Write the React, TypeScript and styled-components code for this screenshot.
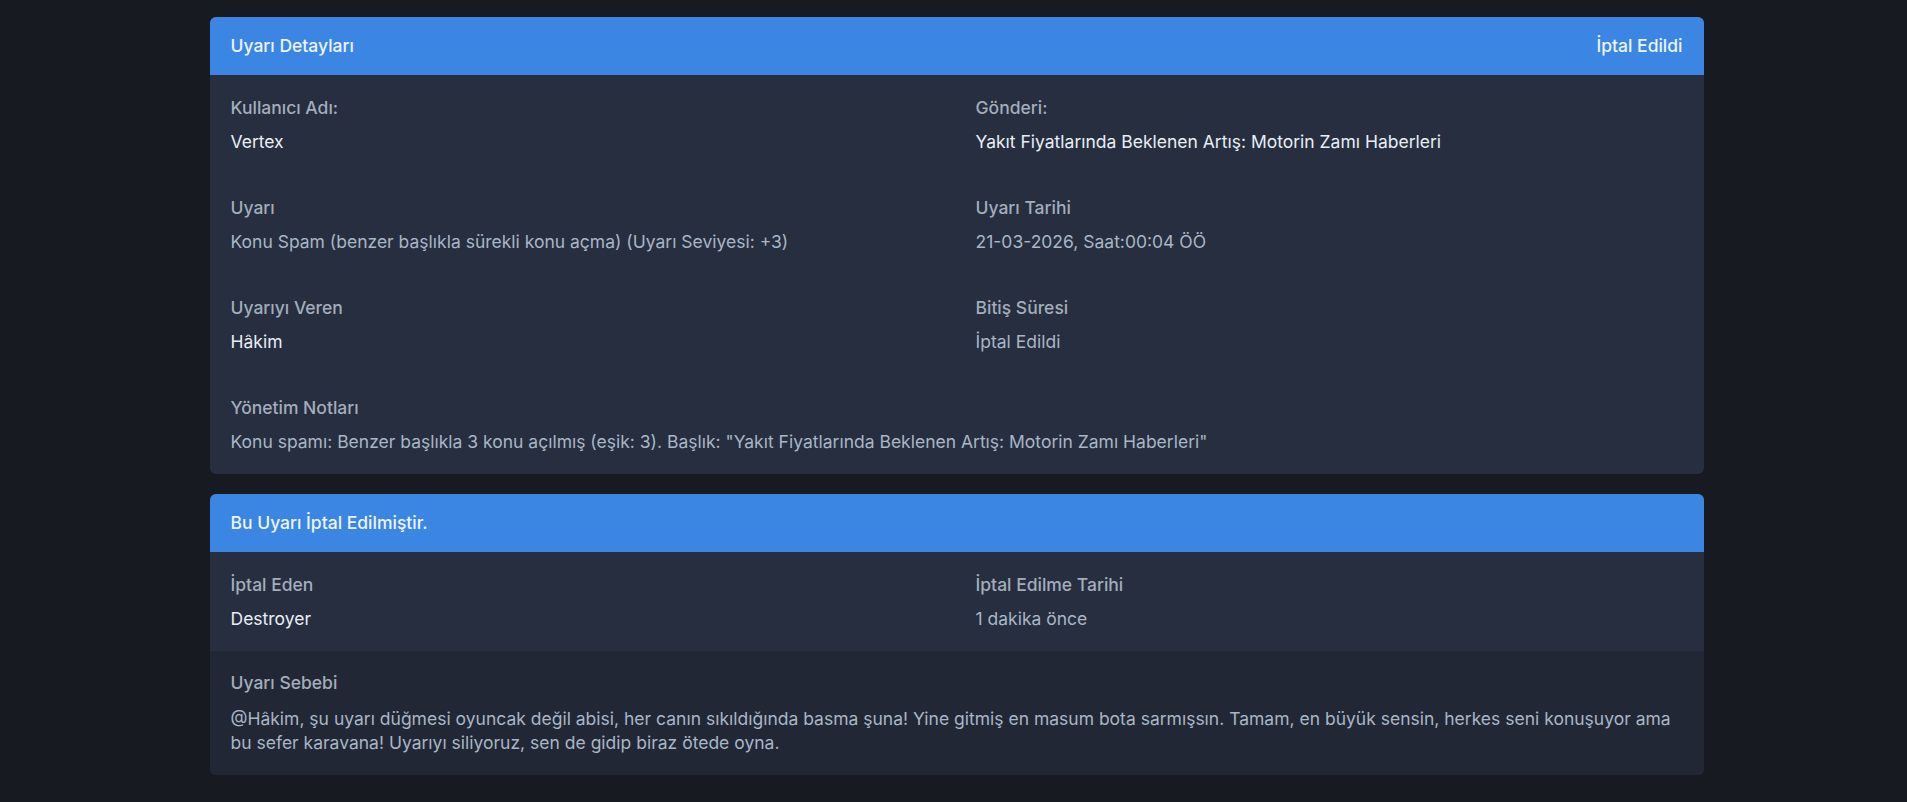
import styled, { createGlobalStyle } from "styled-components";

const GlobalStyle = createGlobalStyle`
  html, body {
    margin: 0;
    padding: 0;
    background: #171a21;
  }
  body {
    font-family: Inter, "Noto Sans", sans-serif;
    font-size: 17.5px;
    line-height: 24px;
  }
`;

type Field = { label: string; value: string; bright?: boolean };

const details: Field[] = [
  { label: "Kullanıcı Adı:", value: "Vertex", bright: true },
  { label: "Gönderi:", value: "Yakıt Fiyatlarında Beklenen Artış: Motorin Zamı Haberleri", bright: true },
  { label: "Uyarı", value: "Konu Spam (benzer başlıkla sürekli konu açma) (Uyarı Seviyesi: +3)" },
  { label: "Uyarı Tarihi", value: "21-03-2026, Saat:00:04 ÖÖ" },
  { label: "Uyarıyı Veren", value: "Hâkim", bright: true },
  { label: "Bitiş Süresi", value: "İptal Edildi" },
];

export default function App() {
  return (
    <>
      <GlobalStyle />
      <Page>
        <Card>
          <CardHeader>
            <span>Uyarı Detayları</span>
            <span>İptal Edildi</span>
          </CardHeader>
          <CardBody>
            <Grid>
              {details.map((f) => (
                <FieldBox key={f.label}>
                  <Label>{f.label}</Label>
                  <Value $bright={f.bright}>{f.value}</Value>
                </FieldBox>
              ))}
            </Grid>
            <FieldBox $last>
              <Label>Yönetim Notları</Label>
              <Value>
                Konu spamı: Benzer başlıkla 3 konu açılmış (eşik: 3). Başlık: "Yakıt Fiyatlarında Beklenen Artış: Motorin Zamı Haberleri"
              </Value>
            </FieldBox>
          </CardBody>
        </Card>

        <Card>
          <CardHeader>
            <span>Bu Uyarı İptal Edilmiştir.</span>
          </CardHeader>
          <CardBody>
            <Grid>
              <FieldBox $last>
                <Label>İptal Eden</Label>
                <Value $bright>Destroyer</Value>
              </FieldBox>
              <FieldBox $last>
                <Label>İptal Edilme Tarihi</Label>
                <Value>1 dakika önce</Value>
              </FieldBox>
            </Grid>
          </CardBody>
          <ReasonSection>
            <Label $gap={12}>Uyarı Sebebi</Label>
            <Value>
              @Hâkim, şu uyarı düğmesi oyuncak değil abisi, her canın sıkıldığında basma şuna! Yine gitmiş en masum bota sarmışsın. Tamam, en büyük sensin, herkes seni konuşuyor ama bu sefer karavana! Uyarıyı siliyoruz, sen de gidip biraz ötede oyna.
            </Value>
          </ReasonSection>
        </Card>
      </Page>
    </>
  );
}

const Page = styled.div`
  width: 1494px;
  margin: 0 auto;
  padding: 17px 0 24px;
  display: flex;
  flex-direction: column;
  gap: 20px;
  transform: translateX(3px);
`;

const Card = styled.section`
  background: #262e40;
  border-radius: 6px;
  overflow: hidden;
`;

const CardHeader = styled.header`
  display: flex;
  justify-content: space-between;
  align-items: center;
  height: 58px;
  padding: 0 21px;
  background: #3b86e3;
  color: #eef4fd;
  font-weight: 500;
`;

const CardBody = styled.div`
  padding: 21px 21px 20px;
`;

const Grid = styled.div`
  display: grid;
  grid-template-columns: 745px 1fr;
`;

const FieldBox = styled.div<{ $last?: boolean }>`
  display: flex;
  flex-direction: column;
  margin-bottom: ${(p) => (p.$last ? "0" : "42px")};
`;

const Label = styled.div<{ $gap?: number }>`
  color: #a3adbb;
  font-weight: 500;
  margin-bottom: ${(p) => p.$gap ?? 10}px;
`;

const Value = styled.div<{ $bright?: boolean }>`
  color: ${(p) => (p.$bright ? "#e9eef5" : "#a9b6c6")};
`;

const ReasonSection = styled.div`
  background: #222735;
  padding: 20px 21px 20px;
`;
